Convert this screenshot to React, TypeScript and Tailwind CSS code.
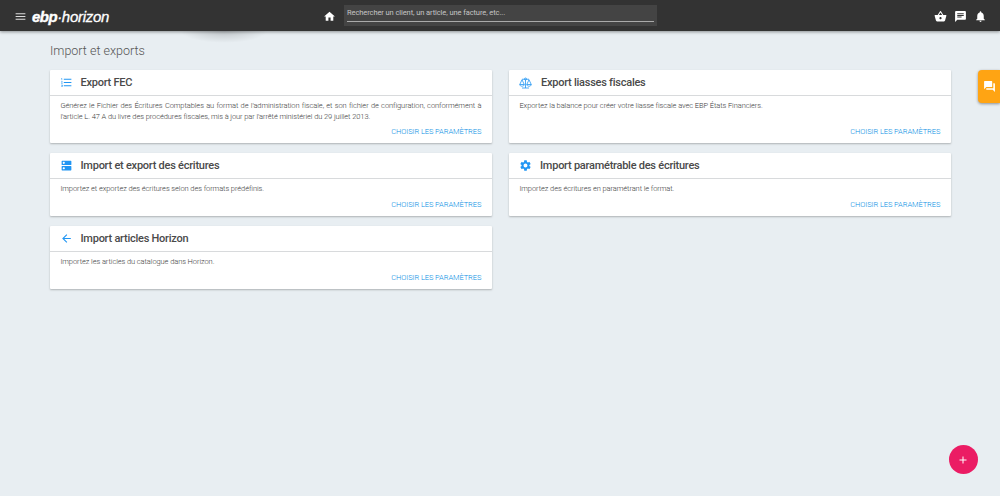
import type { ReactNode } from 'react';
import {
  MdAdd,
  MdArrowBack,
  MdChat,
  MdDns,
  MdFormatListNumbered,
  MdHome,
  MdMenu,
  MdNotifications,
  MdQuestionAnswer,
  MdSettings,
  MdShoppingBasket,
} from 'react-icons/md';

function ScalesIcon() {
  return (
    <svg viewBox="0 0 26 24" className="h-3 w-[13px]" fill="none" stroke="currentColor" strokeWidth="1.6">
      <path d="M6 4.500h14M13 6v16M6 22h14" />
      <circle cx="13" cy="4" r="2" />
      <path d="M6 5.500 1.500 15h9L6 5.500ZM20 5.500 15.500 15h9L20 5.500Z" />
      <path d="M1.500 15c0 4.500 9 4.500 9 0M15.500 15c0 4.500 9 4.500 9 0" />
    </svg>
  );
}

interface CardProps {
  icon: ReactNode;
  title: string;
  titleClass: string;
  text: string;
  textClass?: string;
  tall?: boolean;
}

function Card({ icon, title, titleClass, text, textClass = '', tall = false }: CardProps) {
  return (
    <section
      className={`flex flex-col rounded-[1px] bg-white shadow-[0_1px_2px_rgba(0,0,0,0.25)] ${tall ? 'h-[73px]' : 'h-[63px]'}`}
    >
      <header className="flex h-[26px] shrink-0 items-center border-b border-[#d8dadc] pl-2.5">
        <span className="flex w-[13px] shrink-0 justify-center text-[#2196f3]">{icon}</span>
        <h2 className={`whitespace-nowrap pt-px text-[11px] font-medium leading-[24px] tracking-[-0.25px] text-[#4a4a4a] ${titleClass}`}>{title}</h2>
      </header>
      <div className="flex grow flex-col justify-between pb-[5px] pl-[10.4px] pr-[10.7px] pt-[5px]">
        <p className={`text-[7.5px] font-light leading-[10.5px] tracking-[-0.09px] text-[#3c3c3c] ${textClass}`}>{text}</p>
        <button className="self-end whitespace-nowrap text-[7.5px] font-light leading-3 tracking-[-0.08px] text-[#0a90e4]">CHOISIR LES PARAMÈTRES</button>
      </div>
    </section>
  );
}

export default function App() {
  return (
    <div className="flex h-[496px] w-[1000px] flex-col overflow-hidden bg-[#e8eef2] font-['Roboto',sans-serif]">
      <header className="relative z-10 flex h-[31px] shrink-0 items-center bg-[#333] text-white shadow-[0_1px_3px_rgba(0,0,0,0.4)]">
        <div className="flex w-[323px] items-center pl-3.5 pt-0.5">
          <MdMenu className="size-[13px] text-[#ddd]" />
          <div className="ml-[5px] flex items-baseline whitespace-nowrap font-['Liberation_Sans',sans-serif] italic leading-5">
            <span className="text-[15px] font-bold tracking-[-0.5px] [-webkit-text-stroke:0.4px_white]">ebp</span>
            <span className="text-[15px] tracking-[-0.3px] [-webkit-text-stroke:0.3px_white]">·horizon</span>
          </div>
        </div>
        <MdHome className="mt-0.5 size-[13px]" />
        <div className="ml-2 h-[21px] w-[313px] bg-[#444] px-[3px] pt-0.5">
          <div className="h-[15px] whitespace-nowrap border-b border-[#aaa] text-[7.5px] leading-[12px] tracking-[-0.09px] text-[#c4c4c4]">
            Rechercher un client, un article, une facture, etc...
          </div>
        </div>
        <div className="ml-auto flex items-center gap-[7px] pr-[13px] pt-0.5">
          <MdShoppingBasket className="size-[13px]" />
          <MdChat className="size-[13px]" />
          <MdNotifications className="size-[13px]" />
        </div>
        <div className="absolute left-[180px] top-[31px] h-3 w-[88px] bg-[radial-gradient(ellipse_at_top,rgba(0,0,0,0.17),transparent_70%)]" />
      </header>
      <main className="w-[951px] pl-[50px] pt-2.5">
        <h1 className="text-[12.5px] font-light leading-[19px] text-[#555]">Import et exports</h1>
        <div className="mt-[10px] grid grid-cols-[442px_442px] gap-x-[17px] gap-y-2.5">
          <Card
            tall
            icon={<MdFormatListNumbered className="size-[13px]" />}
            title="Export FEC"
            titleClass="ml-[7.5px]"
            text="Générez le Fichier des Écritures Comptables au format de l'administration fiscale, et son fichier de configuration, conformément à l'article L. 47 A du livre des procédures fiscales, mis à jour par l'arrêté ministériel du 29 juillet 2013."
            textClass="text-justify"
          />
          <Card
            tall
            icon={<ScalesIcon />}
            title="Export liasses fiscales"
            titleClass="ml-[9px]"
            text="Exportez la balance pour créer votre liasse fiscale avec EBP États Financiers."
          />
          <Card
            icon={<MdDns className="size-[13px]" />}
            title="Import et export des écritures"
            titleClass="ml-[7.5px]"
            text="Importez et exportez des écritures selon des formats prédéfinis."
          />
          <Card
            icon={<MdSettings className="size-[13px]" />}
            title="Import paramétrable des écritures"
            titleClass="ml-2"
            text="Importez des écritures en paramétrant le format."
          />
          <Card
            icon={<MdArrowBack className="size-[13px]" />}
            title="Import articles Horizon"
            titleClass="ml-[7.5px]"
            text="Importez les articles du catalogue dans Horizon."
          />
        </div>
      </main>
      <button
        aria-label="Discussion"
        className="fixed left-[978px] top-[70px] flex h-[33px] w-[22px] items-center justify-center rounded-l-[4px] bg-[#ffa413] pl-px text-white shadow-[0_1px_3px_rgba(0,0,0,0.4)]"
      >
        <MdQuestionAnswer className="size-[13px]" />
      </button>
      <button
        aria-label="Ajouter"
        className="fixed left-[949px] top-[445px] flex size-[29px] items-center justify-center rounded-full bg-[#eb1c64] pr-px text-white"
      >
        <MdAdd className="size-3" />
      </button>
    </div>
  );
}
